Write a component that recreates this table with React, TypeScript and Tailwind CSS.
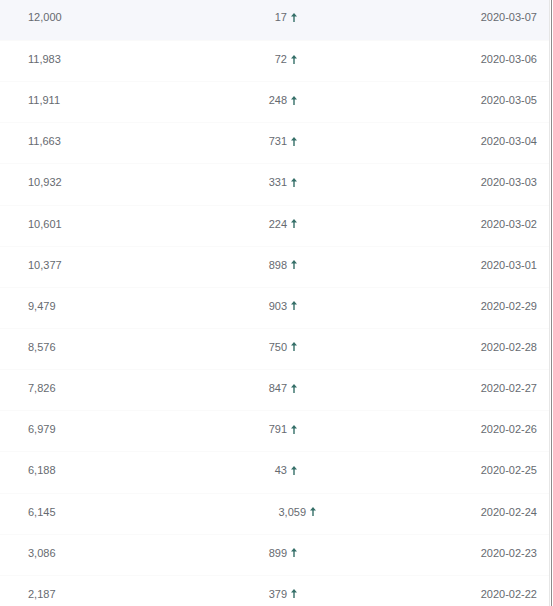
import React from "react";

const rows: { total: string; inc: string; date: string; wide?: boolean }[] = [
  { total: "12,000", inc: "17", date: "2020-03-07" },
  { total: "11,983", inc: "72", date: "2020-03-06" },
  { total: "11,911", inc: "248", date: "2020-03-05" },
  { total: "11,663", inc: "731", date: "2020-03-04" },
  { total: "10,932", inc: "331", date: "2020-03-03" },
  { total: "10,601", inc: "224", date: "2020-03-02" },
  { total: "10,377", inc: "898", date: "2020-03-01" },
  { total: "9,479", inc: "903", date: "2020-02-29" },
  { total: "8,576", inc: "750", date: "2020-02-28" },
  { total: "7,826", inc: "847", date: "2020-02-27" },
  { total: "6,979", inc: "791", date: "2020-02-26" },
  { total: "6,188", inc: "43", date: "2020-02-25" },
  { total: "6,145", inc: "3,059", date: "2020-02-24", wide: true },
  { total: "3,086", inc: "899", date: "2020-02-23" },
  { total: "2,187", inc: "379", date: "2020-02-22" },
];

function UpArrow() {
  return (
    <svg width="6" height="9" viewBox="0 0 6 9" className="ml-[4px] shrink-0">
      <path d="M3 0 L6 3.6 L3.7 3.6 L3.7 9 L2.3 9 L2.3 3.6 L0 3.6 Z" fill="#356f68" />
    </svg>
  );
}

export default function App() {
  return (
    <div
      className="flex w-[553px] h-[606px] overflow-hidden bg-white text-[11px] text-[#666a70]"
      style={{ fontFamily: '"Liberation Sans", Arial, sans-serif' }}
    >
      <div className="w-[549px] shrink-0 flex flex-col">
        {rows.map((r, i) => (
          <div
            key={r.date}
            className={
              i === 0
                ? "flex items-start shrink-0 h-[40px] pt-[9px] pl-[28px] pr-[12px] bg-[#f6f7fb]"
                : "flex items-start shrink-0 h-[41.15px] pt-[10px] pl-[28px] pr-[12px] border-t border-[#fafafa]"
            }
          >
            <div className="w-[200px] leading-[16px]">{r.total}</div>
            <div className={r.wide ? "w-[88px] flex justify-end items-center leading-[16px]" : "w-[69px] flex justify-end items-center leading-[16px]"}>
              <span>{r.inc}</span>
              <UpArrow />
            </div>
            <div className="flex-1 text-right leading-[16px]">{r.date}</div>
          </div>
        ))}
      </div>
      <div className="w-[1px] bg-[#e6e6e6]" />
      <div className="w-[1px] bg-white" />
      <div className="w-[1px] bg-[#8c8c8c]" />
      <div className="w-[1px] bg-white" />
    </div>
  );
}
